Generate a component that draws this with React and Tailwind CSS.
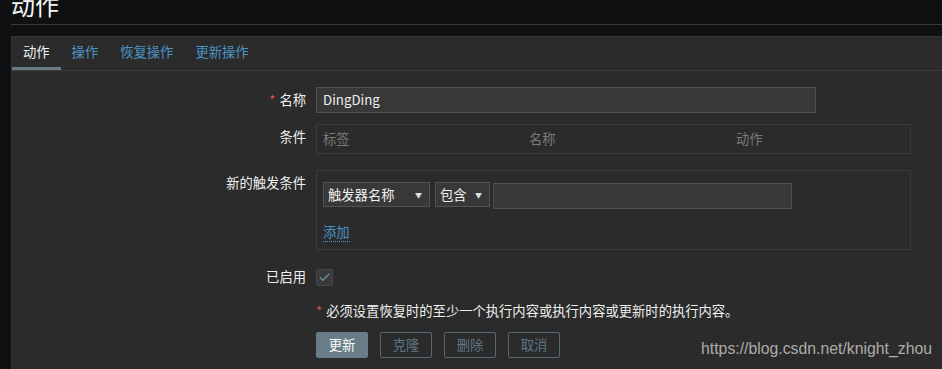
import { Check } from 'lucide-react';

const FONT = "font-['Noto_Sans_CJK_SC','Liberation_Sans',sans-serif]";

function Tab({ label, active }) {
  return (
    <div
      className={
        'flex items-center h-[33px] px-[11px] border-b-[3px] text-[13.3px] leading-[18px] ' +
        (active ? 'border-[#687c88] text-[#f2f2f2]' : 'border-transparent text-[#4a94c6]')
      }
    >
      {label}
    </div>
  );
}

function Select({ label, width }) {
  return (
    <div
      className="flex items-center justify-between h-[25px] bg-[#383838] border border-[#525252] pl-[4px] pr-[7px] text-[13.3px] leading-[18px] text-[#f0f0f0]"
      style={{ width }}
    >
      <span>{label}</span>
      <span className="text-[7px] leading-[8px] text-[#e0e0e0]">▼</span>
    </div>
  );
}

function Label({ children, top }) {
  return (
    <div className={'flex justify-end text-[13.3px] leading-[18px] text-[#f0f0f0] ' + (top ? 'pt-[4px]' : 'items-center')}>
      {children}
    </div>
  );
}

function Button({ label, primary }) {
  return (
    <button
      className={
        'h-[26px] w-[52px] rounded-[2px] border text-[13.3px] leading-[18px] ' +
        (primary
          ? 'bg-[#687d88] border-[#687d88] text-[#ffffff]'
          : 'bg-transparent border-[#566974] text-[#5e7583]')
      }
    >
      {label}
    </button>
  );
}

export default function App() {
  return (
    <div className={'relative h-[369px] w-[942px] overflow-hidden bg-[#0f1012] pl-[11px] leading-[18px] ' + FONT}>
      {/* Page title */}
      <div className="h-[25px] overflow-hidden border-b border-[#393a3c]">
        <h1 className="-mt-[7px] text-[24px] leading-[24px] text-[#f4f4f4]">动作</h1>
      </div>

      {/* Panel */}
      <div className="mt-[11px] h-[400px] bg-[#2b2b2b] border-l border-t border-[#363636]">
        {/* Tabs */}
        <div className="flex border-b border-[#3c3c3c]">
          <Tab label="动作" active />
          <Tab label="操作" />
          <Tab label="恢复操作" />
          <Tab label="更新操作" />
        </div>

        {/* Form */}
        <div className="grid grid-cols-[294px_1fr] gap-x-[10px] pt-[16px]">
          <Label>
            <span className="text-[#d9534f] mr-[4px]">*</span>名称
          </Label>
          <div className="flex items-center w-[500px] h-[26px] bg-[#383838] border border-[#4f4f4f] px-[6px] text-[13.3px] text-[#f0f0f0]">
            DingDing
          </div>

          <div className="col-span-2 h-[11px]" />

          <Label top>条件</Label>
          <div className="grid grid-cols-[206px_207px_1fr] items-center w-[595px] h-[30px] border border-[#3a3a3a] px-[6px] text-[13.3px] leading-[18px] text-[#7a7a7a]">
            <span>标签</span>
            <span>名称</span>
            <span>动作</span>
          </div>

          <div className="col-span-2 h-[16px]" />

          <Label top>新的触发条件</Label>
          <div className="flex flex-col items-start w-[595px] border border-[#3a3a3a] px-[6px] pt-[11px] pb-[7px]">
            <div className="flex items-start">
              <Select label="触发器名称" width={107} />
              <div className="ml-[5px]">
                <Select label="包含" width={55} />
              </div>
              <div className="ml-[3px] mt-[1px] w-[299px] h-[26px] bg-[#383838] border border-[#4f4f4f]" />
            </div>
            <span className="mt-[14px] block text-[13.3px] leading-[18px] text-[#4a94c6] border-b border-dotted border-[#4a94c6]">
              添加
            </span>
          </div>

          <div className="col-span-2 h-[18px]" />

          <Label>已启用</Label>
          <div className="flex items-center">
            <div className="flex items-center justify-center w-[17px] h-[17px] rounded-[2px] bg-[#3a3a3a] border border-[#474747]">
              <Check size={13} strokeWidth={3} className="text-[#6a8796]" />
            </div>
          </div>

          <div className="col-start-2 mt-[16px] text-[13.3px] leading-[18px] text-[#f0f0f0]">
            <span className="text-[#d9534f] mr-[4px]">*</span>
            必须设置恢复时的至少一个执行内容或执行内容或更新时的执行内容。
          </div>

          <div className="col-start-2 mt-[12px] flex gap-[12px]">
            <Button label="更新" primary />
            <Button label="克隆" />
            <Button label="删除" />
            <Button label="取消" />
          </div>
        </div>
      </div>

      {/* Watermark */}
      <div className="absolute right-[10px] bottom-[11px] font-['Liberation_Sans',sans-serif] text-[15.8px] leading-[18px] text-[#ababab]">
        https://blog.csdn.net/knight_zhou
      </div>
    </div>
  );
}
